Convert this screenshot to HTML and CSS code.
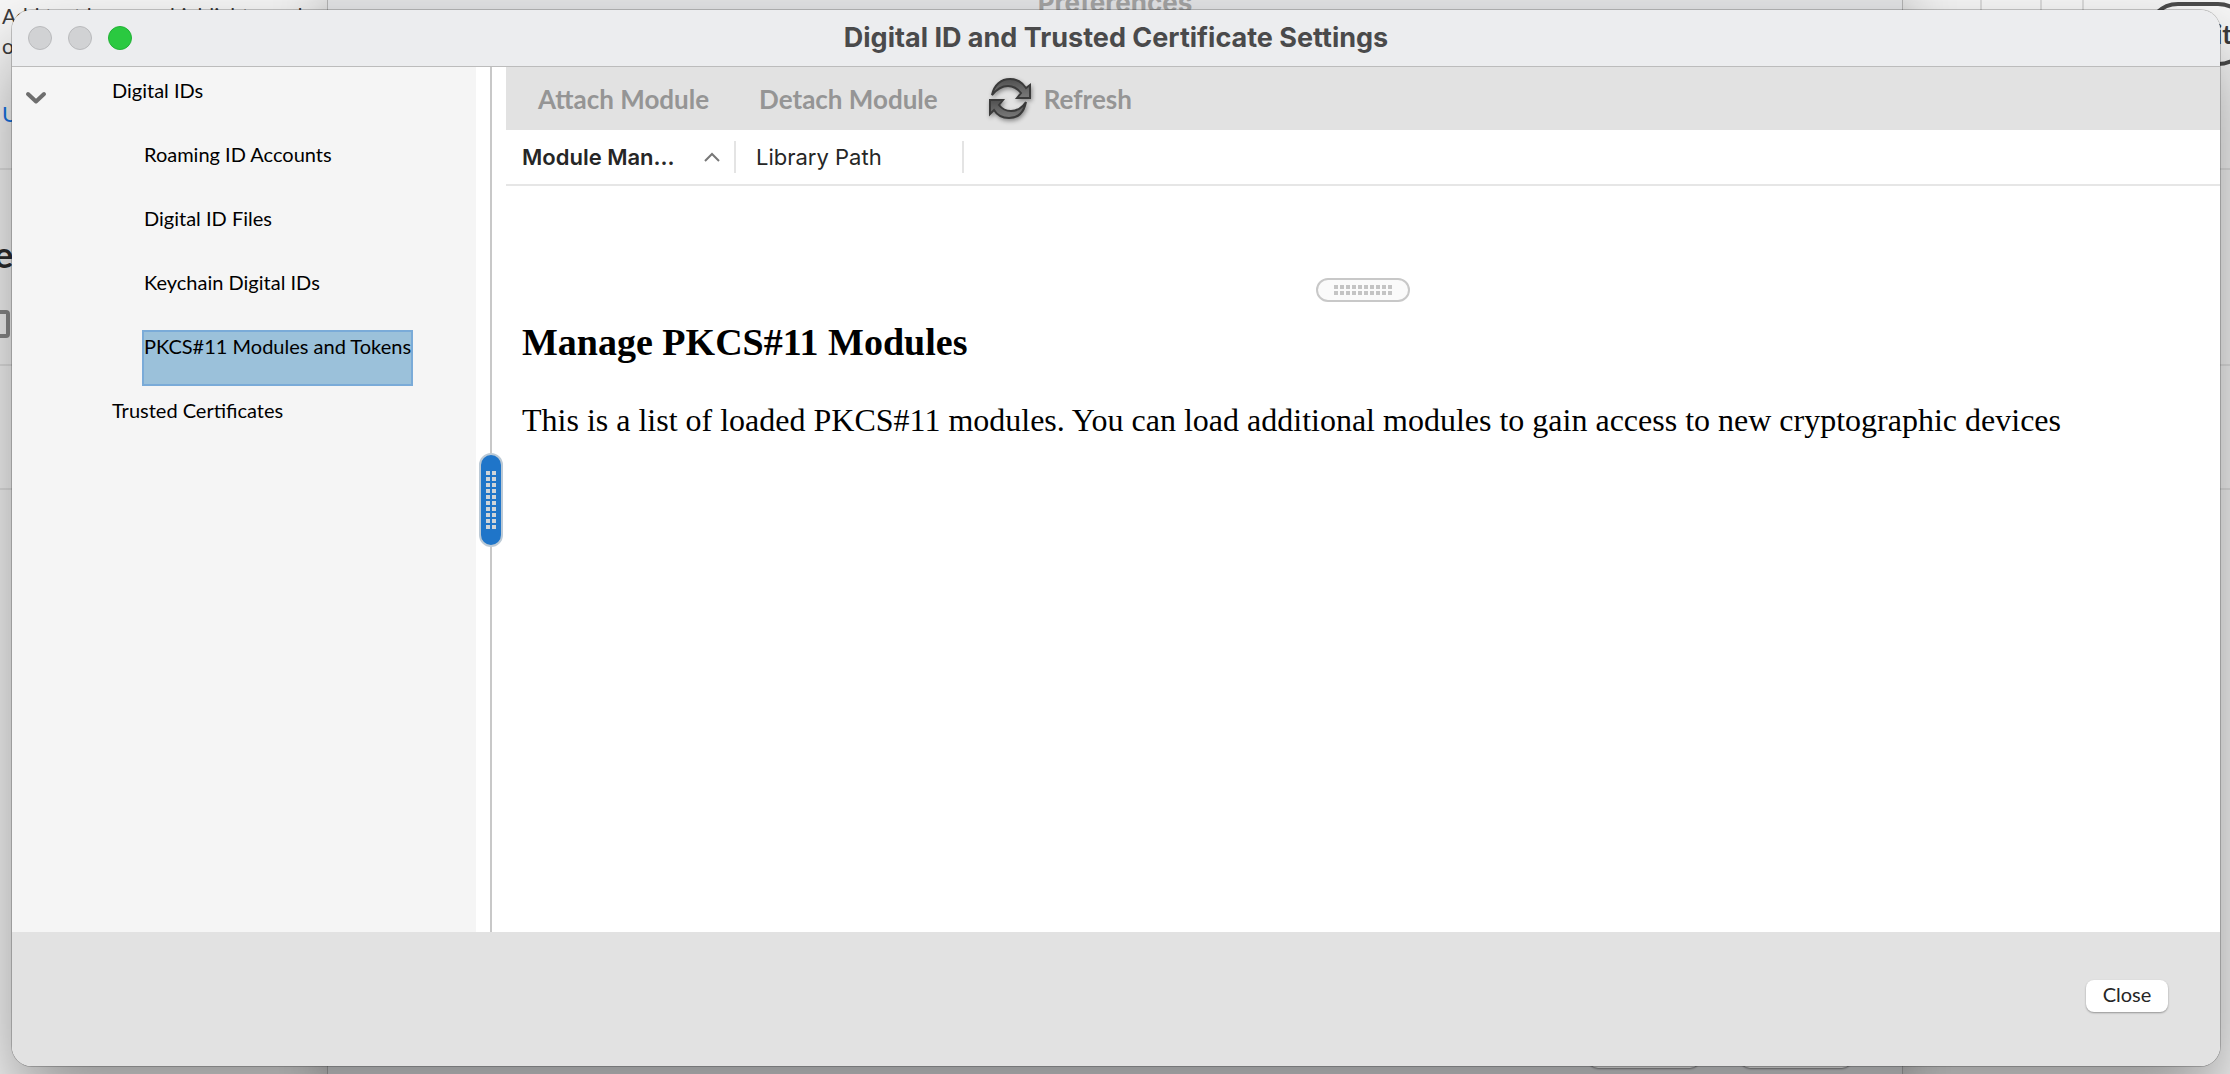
FILE: index.html
```html
<!DOCTYPE html>
<html lang="en">
<head>
    <meta charset="UTF-8">
    <meta name="viewport" content="width=device-width, initial-scale=1.0">
    <title>Digital ID and Trusted Certificate Settings</title>
    <link rel="stylesheet" href="styles.css">
</head>
<body>
    <!-- windows behind the dialog -->
    <div class="desktop" aria-hidden="true">
        <div class="page-text">Add text boxes or highlights, and<br>o</div>
        <div class="page-link">U</div>
        <div class="page-heading">e</div>
        <div class="page-box"></div>
        <div class="page-line line-1"></div>
        <div class="page-line line-2"></div>
        <div class="page-line line-3"></div>
        <div class="page-tabs"><span></span><span></span><span></span></div>
        <div class="page-pill">it</div>
        <div class="preferences">
            <div class="preferences-title">Preferences</div>
            <div class="preferences-buttons"><span></span><span></span></div>
        </div>
    </div>

    <div class="dialog" role="dialog" aria-labelledby="dialogTitle">
        <header class="titlebar">
            <div class="lights">
                <button class="light" aria-label="Close window" disabled></button>
                <button class="light" aria-label="Minimize" disabled></button>
                <button class="light zoom" aria-label="Zoom"></button>
            </div>
            <h1 id="dialogTitle">Digital ID and Trusted Certificate Settings</h1>
        </header>

        <div class="content">
            <nav class="sidebar">
                <button class="expander" aria-label="Collapse Digital IDs">
                    <svg width="22" height="14" viewBox="0 0 22 14"><path d="M3 3l8 7.500l8-7.500" fill="none" stroke="#6e6e6e" stroke-width="4" stroke-linecap="round" stroke-linejoin="round"/></svg>
                </button>
                <ul class="tree">
                    <li><a href="#">Digital IDs</a>
                        <ul>
                            <li><a href="#">Roaming ID Accounts</a></li>
                            <li><a href="#">Digital ID Files</a></li>
                            <li><a href="#">Keychain Digital IDs</a></li>
                            <li><a href="#" class="selected">PKCS#11 Modules and Tokens</a></li>
                        </ul>
                    </li>
                    <li><a href="#">Trusted Certificates</a></li>
                </ul>
            </nav>

            <div class="splitter">
                <div class="grip grip-vertical">
                    <svg width="10" height="58" viewBox="0 0 10 58"><path d="M2 0v58M8 0v58" stroke="#d0d4d8" stroke-width="4" stroke-dasharray="4 2"/></svg>
                </div>
            </div>

            <main class="main">
                <div class="toolbar">
                    <button disabled>Attach Module</button>
                    <button disabled>Detach Module</button>
                    <button class="refresh" disabled>
                        <svg width="44" height="44" viewBox="0 0 44 44">
                            <defs>
                                <linearGradient id="arrow" x1="0" y1="0" x2="0" y2="1">
                                    <stop offset="0" stop-color="#505050"/>
                                    <stop offset="1" stop-color="#7a7a7a"/>
                                </linearGradient>
                            </defs>
                            <g fill="url(#arrow)" stroke="#3a3a3a" stroke-width="2">
                                <path d="M4 18C6 8 13 2 22 2C29 2 34 5 38 11L42 8V21H29L33 16C29 11 25 9 20 9C14 9 9 12 4 18Z"/>
                                <path d="M38 25C36 35 30 41 21 41C14 41 9 38 6 33L2 37V23H15L11 28C14 32 18 34 23 34C29 34 34 31 38 25Z"/>
                            </g>
                        </svg>
                        <span>Refresh</span>
                    </button>
                </div>

                <table class="modules">
                    <thead>
                        <tr>
                            <th class="sorted" aria-sort="ascending">
                                <div class="cell">Module Man...
                                    <svg width="16" height="10" viewBox="0 0 16 10"><path d="M1 9l7-7l7 7" fill="none" stroke="#777" stroke-width="2"/></svg>
                                </div>
                            </th>
                            <th><div class="cell">Library Path</div></th>
                            <th class="rest"></th>
                        </tr>
                    </thead>
                </table>

                <div class="grip grip-horizontal">
                    <svg width="58" height="10" viewBox="0 0 58 10"><path d="M0 2h58M0 8h58" stroke="#c4c4c4" stroke-width="4" stroke-dasharray="4 2"/></svg>
                </div>

                <section class="details">
                    <h2>Manage PKCS#11 Modules</h2>
                    <p>This is a list of loaded PKCS#11 modules. You can load additional modules to gain access to new cryptographic devices</p>
                </section>
            </main>
        </div>

        <footer class="footer">
            <button class="close">Close</button>
        </footer>
    </div>
</body>
</html>
```

FILE: styles.css
```css
* {
    box-sizing: border-box;
}
body {
    margin: 0;
    height: 100vh;
    padding: 10px 10px 8px 12px;
    overflow: hidden;
    background: #f8f8f8;
    font-family: Lato, sans-serif;
    font-size: 20px;
    color: #000;
}
button {
    font: inherit;
    border: none;
    background: none;
    padding: 0;
}
a {
    color: inherit;
    text-decoration: none;
}
h1, h2, p, ul {
    margin: 0;
    padding: 0;
}
ul {
    list-style: none;
}
svg {
    display: block;
}

/* background windows */
.desktop {
    position: absolute;
    inset: 0;
    overflow: hidden;
}
.desktop > div {
    position: absolute;
}
.page-text {
    left: 2px;
    top: 1px;
    font-size: 21px;
    line-height: 30px;
    color: #3c3c3c;
    white-space: nowrap;
}
.page-link {
    left: 2px;
    top: 100px;
    font-size: 22px;
    color: #1473e6;
}
.page-heading {
    left: -6px;
    top: 232px;
    font-size: 36px;
    font-weight: bold;
    color: #2c2c2c;
}
.page-box {
    left: -18px;
    top: 310px;
    width: 28px;
    height: 28px;
    border: 4px solid #8a8a8a;
    border-radius: 4px;
}
.page-line {
    left: 0;
    right: 0;
    height: 2px;
    background: #e4e4e4;
}
.line-1 {
    top: 168px;
}
.line-2 {
    top: 364px;
}
.line-3 {
    top: 488px;
}
.page-tabs {
    right: 146px;
    top: 0;
    display: flex;
}
.page-tabs span {
    width: 42px;
    height: 30px;
    border-right: 2px solid #dcdcdc;
}
.page-tabs span:nth-child(2) {
    width: 60px;
}
.page-pill {
    right: -20px;
    top: 2px;
    width: 104px;
    height: 64px;
    border: 4px solid #4b4b4b;
    border-radius: 32px;
    padding-right: 14px;
    line-height: 56px;
    font-size: 26px;
    font-weight: bold;
    text-align: right;
    color: #3c3c3c;
}
.desktop > .preferences {
    left: 327px;
    right: 327px;
    top: -20px;
    bottom: -20px;
    background: #e4e5e7;
    border: 1px solid #b4b4b4;
    box-shadow: 0 10px 50px rgba(0, 0, 0, 0.25);
}
.preferences-title {
    font: bold 26px/44px Inter, sans-serif;
    text-align: center;
    color: #a4a4a4;
}
.preferences-buttons {
    position: absolute;
    right: 50px;
    bottom: 25px;
    display: flex;
    gap: 40px;
}
.preferences-buttons span {
    width: 112px;
    height: 32px;
    border-radius: 10px;
    background: #fff;
    box-shadow: 0 1px 2px rgba(0, 0, 0, 0.4);
}

/* dialog */
.dialog {
    position: relative;
    display: flex;
    flex-direction: column;
    height: 100%;
    border-radius: 20px;
    overflow: hidden;
    background: #fff;
    box-shadow: 0 0 0 1px rgba(0, 0, 0, 0.2), 0 40px 80px rgba(0, 0, 0, 0.42);
}
.titlebar {
    display: grid;
    grid-template-columns: 1fr auto 1fr;
    align-items: center;
    height: 57px;
    padding: 0 16px;
    background: #ecedef;
    border-bottom: 1px solid #bcbcbc;
    flex-shrink: 0;
}
.titlebar h1 {
    font: bold 27px/32px Inter, sans-serif;
    color: #4a4a4b;
}
.lights {
    display: flex;
    gap: 16px;
}
.light {
    width: 24px;
    height: 24px;
    border-radius: 50%;
    background: #d1d2d4;
    border: 1px solid #b9babc;
}
.light.zoom {
    background: #2ac940;
    border-color: #22b136;
}
.content {
    display: flex;
    flex: 1;
    min-height: 0;
}
.sidebar {
    display: flex;
    align-items: flex-start;
    width: 464px;
    background: #f5f5f5;
}
.expander {
    margin: 24px 0 0 13px;
}
.tree {
    padding: 7px 0 0 63px;
}
.tree ul {
    padding-left: 32px;
}
.tree a {
    display: block;
    width: max-content;
    height: 56px;
    margin: 0 0 8px;
    line-height: 28px;
    border: 2px solid transparent;
}
.tree a.selected {
    background: #9bc1da;
    border-color: #7aabd8;
}
.splitter {
    position: relative;
    width: 30px;
    background: linear-gradient(#c8c8c8, #c8c8c8) 14px 0 / 2px 100% no-repeat;
}
.grip {
    display: flex;
    align-items: center;
    justify-content: center;
}
.grip-vertical {
    position: absolute;
    left: 3px;
    top: 50%;
    width: 24px;
    height: 94px;
    transform: translateY(-50%);
    border: 2px solid #bccad6;
    border-radius: 12px;
    background: #1f75c9;
}
.grip-horizontal {
    width: 94px;
    height: 24px;
    margin: 92px auto 0;
    border: 2px solid #c8c8c8;
    border-radius: 12px;
    background: #fafafa;
}
.main {
    flex: 1;
    min-width: 0;
}
.toolbar {
    display: flex;
    align-items: center;
    gap: 50px;
    height: 63px;
    padding-left: 32px;
    background: #e2e2e2;
}
.toolbar button {
    font-size: 26px;
    font-weight: bold;
    color: #959595;
}
.toolbar .refresh {
    display: flex;
    align-items: center;
    gap: 12px;
}
.refresh svg {
    filter: drop-shadow(1px 2px 2px rgba(0, 0, 0, 0.4));
}
.modules {
    width: 100%;
    border-collapse: collapse;
    table-layout: fixed;
    border-bottom: 2px solid #e6e6e6;
}
.modules th {
    width: 228px;
    height: 55px;
    padding: 0;
    font: 22px/32px Inter, sans-serif;
    text-align: left;
    color: #262626;
}
.modules .sorted {
    width: 230px;
    font-weight: 600;
}
.modules .rest {
    width: auto;
}
.cell {
    display: flex;
    align-items: center;
    justify-content: space-between;
    height: 32px;
    padding: 0 14px 0 20px;
    border-right: 2px solid #e4e4e4;
}
.sorted .cell {
    padding-left: 16px;
}
.details {
    padding: 18px 16px;
    font-family: "Liberation Serif", serif;
}
.details h2 {
    font-size: 38px;
    line-height: 44px;
}
.details p {
    margin-top: 36px;
    font-size: 32px;
    line-height: 40px;
}
.footer {
    display: flex;
    align-items: center;
    justify-content: flex-end;
    height: 134px;
    padding: 0 52px 6px;
    background: #e2e2e2;
    flex-shrink: 0;
}
.close {
    width: 82px;
    height: 32px;
    padding-bottom: 4px;
    border-radius: 8px;
    background: #fff;
    color: #262626;
    box-shadow: 0 1px 2px rgba(0, 0, 0, 0.35);
}
```
